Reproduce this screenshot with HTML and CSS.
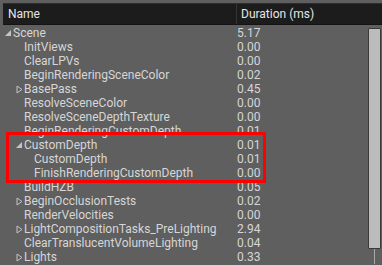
FILE: index.html
```html
<!DOCTYPE html>
<html lang="en">
<head>
    <meta charset="UTF-8">
    <title>GPU Profiler</title>
    <link rel="stylesheet" href="styles.css">
</head>
<body>
    <div class="panel">
        <div class="header">
            <div class="col-name">Name</div>
            <div class="col-dur">Duration (ms)</div>
        </div>

        <div class="body">
            <div class="rows">
                <div class="row lvl0"><span class="arrow open"><svg width="7" height="7"><polygon points="6,0 6,6 0,6" fill="#c4c4c4"/></svg></span><span class="name">Scene</span><span class="dur">5.17</span></div>
                <div class="row lvl1"><span class="arrow"></span><span class="name">InitViews</span><span class="dur">0.00</span></div>
                <div class="row lvl1"><span class="arrow"></span><span class="name">ClearLPVs</span><span class="dur">0.00</span></div>
                <div class="row lvl1"><span class="arrow"></span><span class="name">BeginRenderingSceneColor</span><span class="dur">0.02</span></div>
                <div class="row lvl1"><span class="arrow"><svg width="7" height="9"><polygon points="1,1 6,4.5 1,8" fill="none" stroke="#c4c4c4" stroke-width="1"/></svg></span><span class="name">BasePass</span><span class="dur">0.45</span></div>
                <div class="row lvl1"><span class="arrow"></span><span class="name">ResolveSceneColor</span><span class="dur">0.00</span></div>
                <div class="row lvl1"><span class="arrow"></span><span class="name">ResolveSceneDepthTexture</span><span class="dur">0.00</span></div>
                <div class="row lvl1"><span class="arrow"></span><span class="name">BeginRenderingCustomDepth</span><span class="dur">0.01</span></div>
                <div class="row lvl1"><span class="arrow open"><svg width="7" height="7"><polygon points="6,0 6,6 0,6" fill="#c4c4c4"/></svg></span><span class="name">CustomDepth</span><span class="dur">0.01</span></div>
                <div class="row lvl2"><span class="arrow"></span><span class="name">CustomDepth</span><span class="dur">0.01</span></div>
                <div class="row lvl2"><span class="arrow"></span><span class="name">FinishRenderingCustomDepth</span><span class="dur">0.00</span></div>
                <div class="row lvl1"><span class="arrow"></span><span class="name">BuildHZB</span><span class="dur">0.05</span></div>
                <div class="row lvl1"><span class="arrow"><svg width="7" height="9"><polygon points="1,1 6,4.5 1,8" fill="none" stroke="#c4c4c4" stroke-width="1"/></svg></span><span class="name">BeginOcclusionTests</span><span class="dur">0.02</span></div>
                <div class="row lvl1"><span class="arrow"></span><span class="name">RenderVelocities</span><span class="dur">0.00</span></div>
                <div class="row lvl1"><span class="arrow"><svg width="7" height="9"><polygon points="1,1 6,4.5 1,8" fill="none" stroke="#c4c4c4" stroke-width="1"/></svg></span><span class="name">LightCompositionTasks_PreLighting</span><span class="dur">2.94</span></div>
                <div class="row lvl1"><span class="arrow"></span><span class="name">ClearTranslucentVolumeLighting</span><span class="dur">0.04</span></div>
                <div class="row lvl1"><span class="arrow"><svg width="7" height="9"><polygon points="1,1 6,4.5 1,8" fill="none" stroke="#c4c4c4" stroke-width="1"/></svg></span><span class="name">Lights</span><span class="dur">0.33</span></div>
            </div>

            <div class="scrollbar">
                <div class="thumb"></div>
                <div class="track-line"></div>
            </div>

            <!-- highlight annotation -->
            <div class="highlight"></div>
        </div>
    </div>
</body>
</html>
```

FILE: styles.css
```css
html, body {
    margin: 0;
    padding: 0;
    background: #5f5f5f;
    width: 382px;
    height: 265px;
    overflow: hidden;
}

body {
    font-family: 'Roboto', 'Liberation Sans', sans-serif;
    color: #d6d6d6;
}

.panel {
    padding-top: 3px;
}

.header {
    display: flex;
    height: 22px;
    margin-left: 3px;
    background: #1c1c1c;
    border-top: 1px solid #2e2e2e;
    border-bottom: 1px solid #141414;
    box-sizing: border-box;
    font-size: 12px;
    color: #e6e6e6;
    line-height: 20px;
}

.col-name {
    width: 228px;
    padding-left: 5px;
    border-right: 1px solid #333;
}

.col-dur {
    padding-left: 4px;
}

.body {
    position: relative;
    display: flex;
    padding-top: 1px;
}

.rows {
    width: 366px;
}

.row {
    display: flex;
    height: 14px;
    line-height: 14px;
    font-size: 12px;
    white-space: nowrap;
}

.row .arrow {
    width: 8px;
    display: flex;
    align-items: center;
}

.row .arrow.open svg {
    margin-top: 1px;
}

.row .name {
    overflow: hidden;
}

.lvl0 .arrow { margin-left: 5px; }
.lvl0 .name { width: 223px; }

.lvl1 .arrow { margin-left: 16px; }
.lvl1 .name { width: 212px; }

.lvl2 .arrow { margin-left: 26px; }
.lvl2 .name { width: 202px; }

.row .dur {
    padding-left: 1px;
}

.scrollbar {
    width: 16px;
    display: flex;
    flex-direction: column;
    align-items: center;
}

.thumb {
    margin-top: 2px;
    width: 11px;
    height: 219px;
    background: #bcbcbc;
    border: 1px solid #3a3a3a;
    border-radius: 1px;
}

.track-line {
    flex: 1;
    width: 1px;
    background: #a8a8a8;
}

.highlight {
    position: absolute;
    left: 6px;
    top: 107px;
    width: 254px;
    height: 45px;
    border: 3px solid #ff0000;
}
```
